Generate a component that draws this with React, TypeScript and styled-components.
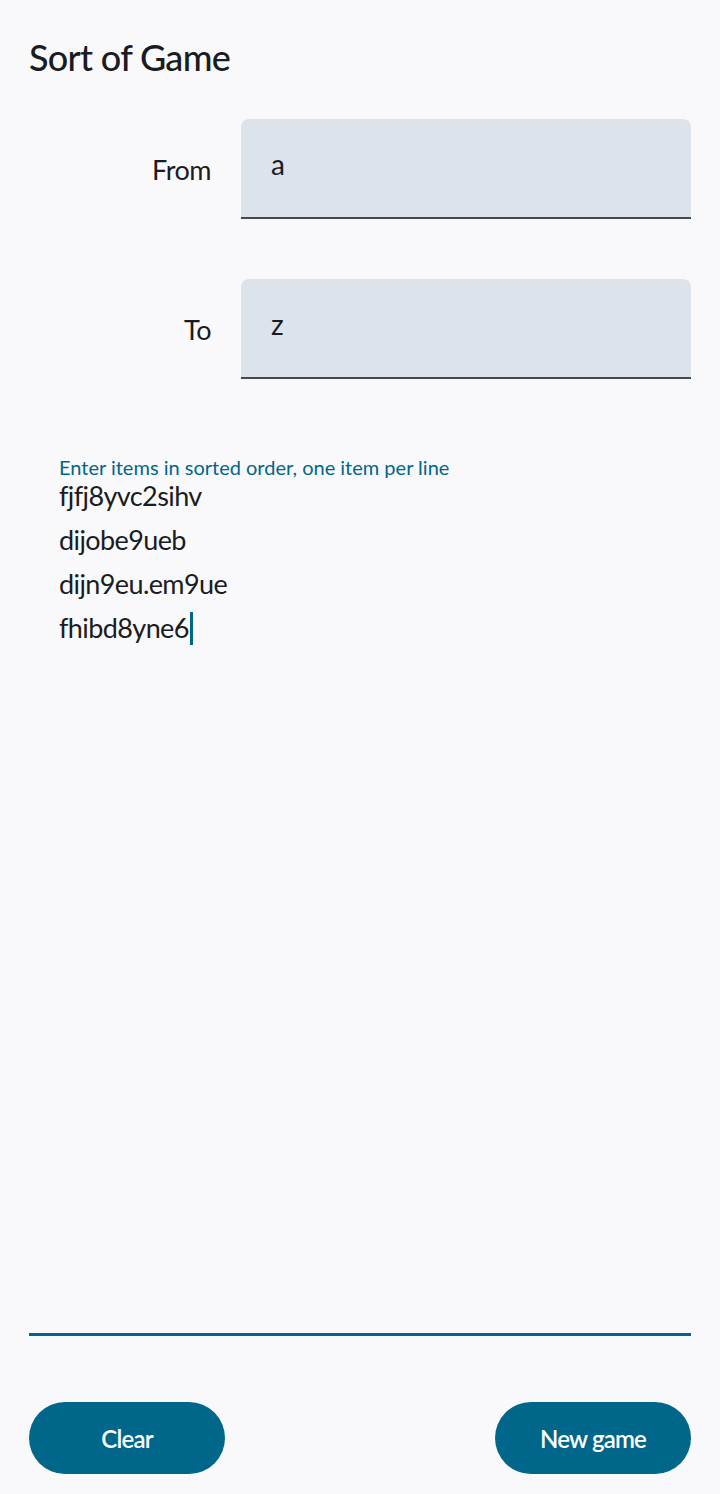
import React from "react";
import styled, { createGlobalStyle } from "styled-components";

const Global = createGlobalStyle`
  html, body { margin: 0; padding: 0; background: #f9f9fc; }
  body { font-family: Lato, "Open Sans", sans-serif; color: #191c20; }
`;

const Page = styled.div`
  width: 720px;
  height: 1494px;
  box-sizing: border-box;
  padding: 0 29px;
  display: flex;
  flex-direction: column;
  background: #f9f9fc;
`;

const Title = styled.h1`
  margin: 34px 0 0 0;
  font-size: 36px;
  line-height: 46px;
  font-weight: 500;
  color: #191c20;
  letter-spacing: -0.7px;
`;

const Form = styled.div`
  margin-top: 39px;
  display: flex;
  flex-direction: column;
  gap: 60px;
`;

const Row = styled.div`
  display: grid;
  grid-template-columns: 182px 1fr;
  column-gap: 30px;
  align-items: center;
`;

const Label = styled.label`
  text-align: right;
  font-size: 27px;
  letter-spacing: -0.5px;
  color: #191c20;
`;

const Field = styled.div`
  height: 98px;
  background: #dde3ea;
  border-radius: 8px 8px 0 0;
  border-bottom: 2px solid #44474e;
  box-sizing: content-box;
  padding: 0 30px;
  display: flex;
  align-items: flex-start;
`;

const FieldValue = styled.span`
  font-size: 28px;
  line-height: 28px;
  margin-top: 31px;
  color: #191c20;
`;

const ItemsArea = styled.div`
  margin-top: 76px;
  flex: 1;
  display: flex;
  flex-direction: column;
  padding: 0 30px;
  border-bottom: 3px solid #00668a;
`;

const Helper = styled.div`
  font-size: 20px;
  line-height: 24px;
  color: #00668a;
`;

const Lines = styled.div`
  font-size: 27px;
  line-height: 44px;
  letter-spacing: -0.6px;
  color: #191c20;
  margin-top: -5px;
`;

const Line = styled.div`
  display: flex;
  align-items: center;
`;

const Caret = styled.span`
  display: inline-block;
  width: 3px;
  height: 33px;
  background: #00668a;
  margin-left: 1px;
`;

const Buttons = styled.div`
  display: flex;
  justify-content: space-between;
  margin-top: 66px;
  margin-bottom: 20px;
`;

const Button = styled.button`
  width: 196px;
  height: 72px;
  border: none;
  border-radius: 36px;
  background: #00668a;
  color: #ffffff;
  font-family: Lato, "Open Sans", sans-serif;
  font-size: 24px;
  font-weight: 600;
  letter-spacing: -0.8px;
  cursor: pointer;
`;

const items = ["fjfj8yvc2sihv", "dijobe9ueb", "dijn9eu.em9ue", "fhibd8yne6"];

export default function App() {
  return (
    <>
      <Global />
      <Page>
        <Title>Sort of Game</Title>
        <Form>
          <Row>
            <Label>From</Label>
            <Field>
              <FieldValue>a</FieldValue>
            </Field>
          </Row>
          <Row>
            <Label>To</Label>
            <Field>
              <FieldValue>z</FieldValue>
            </Field>
          </Row>
        </Form>
        <ItemsArea>
          <Helper>Enter items in sorted order, one item per line</Helper>
          <Lines>
            {items.map((t, i) => (
              <Line key={i}>
                {t}
                {i === items.length - 1 && <Caret />}
              </Line>
            ))}
          </Lines>
        </ItemsArea>
        <Buttons>
          <Button>Clear</Button>
          <Button>New game</Button>
        </Buttons>
      </Page>
    </>
  );
}
